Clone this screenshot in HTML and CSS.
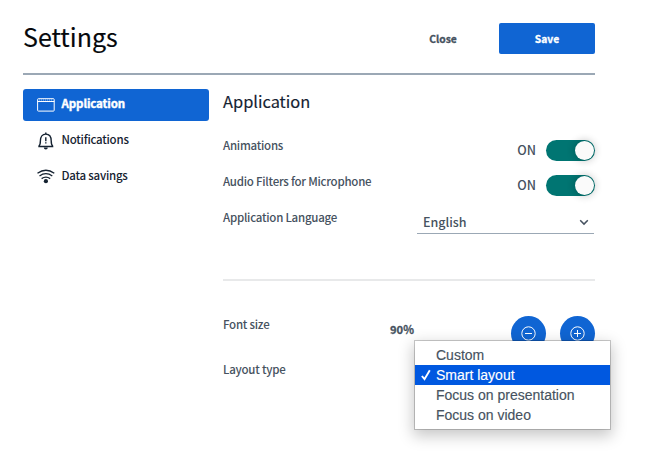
FILE: index.html
```html
<!DOCTYPE html>
<html lang="en">
<head>
<meta charset="utf-8">
<title>Settings</title>
<link rel="stylesheet" href="styles.css">
</head>
<body>
<main class="modal">
  <header class="header">
    <h1 class="title">Settings</h1>
    <button class="btn">Close</button>
    <button class="btn primary">Save</button>
  </header>
  <div class="content">
    <nav class="tabs">
      <a class="tab active">
        <svg class="icon" viewBox="0 0 18 18" fill="none" stroke="currentColor"><rect x=".6" y="2.7" width="16.6" height="12.4" rx=".8"/><path d="M.5 5.5h16.8"/><path d="M2 4h14" stroke-dasharray="1 1" opacity=".55"/></svg>
        <span class="name">Application</span>
      </a>
      <a class="tab">
        <svg class="icon" viewBox="0 0 18 18" fill="none" stroke="currentColor" stroke-width="1.4"><path d="M1.300 14.500h15M1.800 14.300c1.500-1.200 1.600-2.600 1.600-5.500C3.400 4.700 5.500 2.100 8.800 2.100s5.400 2.600 5.400 6.700c0 2.900.1 4.300 1.600 5.500"/><path d="M8.800.5v1.500M8.800 5.200v4M8.800 10.200v1.300"/><path d="M6.800 15.600h4a2 2 0 0 1-4 0z" fill="currentColor" stroke="none"/></svg>
        <span class="name">Notifications</span>
      </a>
      <a class="tab">
        <svg class="icon" viewBox="0 0 18 18" fill="none" stroke="currentColor" stroke-width="1.3"><path d="M.5 5.300q8.400-6.100 16.800 0M2.500 8q6.400-4.700 12.800 0M4.600 10.600q4.300-3 8.600 0"/><circle cx="8.900" cy="13.200" r="2.100" fill="currentColor" stroke="none"/></svg>
        <span class="name">Data savings</span>
      </a>
    </nav>
    <section class="panel">
      <h2 class="heading">Application</h2>
      <div class="row">
        <span class="label">Animations</span>
        <span class="state">ON</span><span class="toggle"><i class="thumb"></i></span>
      </div>
      <div class="row second">
        <span class="label">Audio Filters for Microphone</span>
        <span class="state">ON</span><span class="toggle"><i class="thumb"></i></span>
      </div>
      <div class="row language">
        <span class="label">Application Language</span>
        <div class="select"><span class="value">English</span><svg class="chevron" viewBox="0 0 10 8" fill="none" stroke="currentColor" stroke-width="1.5"><path d="M1.200 2.300 5 6.100 8.800 2.300"/></svg></div>
      </div>
      <hr class="separator">
      <div class="row size">
        <span class="label">Font size</span>
        <strong class="percent">90%</strong>
        <button class="round"><svg class="glyph" viewBox="0 0 16 16" fill="none" stroke="currentColor"><circle cx="7.500" cy="7.500" r="6.700"/><path d="M4 7.500h7"/></svg></button>
        <button class="round"><svg class="glyph" viewBox="0 0 16 16" fill="none" stroke="currentColor"><circle cx="7.500" cy="7.500" r="6.700"/><path d="M4 7.500h7M7.500 4v7"/></svg></button>
      </div>
      <div class="row layout">
        <span class="label">Layout type</span>
        <ul class="menu">
          <li class="option">Custom</li>
          <li class="option selected"><svg class="check" viewBox="0 0 10 12" fill="none" stroke="currentColor" stroke-width="1.900"><path d="M.9 7 3.500 10.200 8.800 1.200"/></svg>Smart layout</li>
          <li class="option">Focus on presentation</li>
          <li class="option">Focus on video</li>
        </ul>
      </div>
    </section>
  </div>
</main>
</body>
</html>
```
FILE: styles.css
```css
* { box-sizing: border-box; }
body {
  margin: 0;
  height: 473px;
  overflow: hidden;
  background: #fff;
  color: #465260;
  font: 500 11.500px/20px "Noto Sans CJK SC", sans-serif;
}
.modal { width: 572px; margin-left: 23px; }
.header {
  display: flex;
  align-items: flex-start;
  height: 75px;
  padding-top: 23px;
  border-bottom: 2px solid #9ba8b5;
}
.title {
  flex: 1;
  margin: -5px 0 0;
  color: #06080c;
  font-size: 25px;
  font-weight: 400;
  line-height: 36px;
  -webkit-text-stroke: .15px currentColor;
}
.btn {
  width: 96px;
  height: 31px;
  padding: 0;
  border: 0;
  border-radius: 2px;
  background: none;
  color: #465260;
  font: 700 10.300px/31px "Noto Sans CJK SC", sans-serif;
  -webkit-text-stroke: .3px currentColor;
}
.btn.primary { margin-left: 8px; background: #1065d3; color: #fff; }
.content { display: flex; gap: 14px; padding-top: 14px; }
.tabs { width: 186px; }
.tab {
  display: flex;
  align-items: center;
  gap: 6.500px;
  height: 32px;
  margin-bottom: 4px;
  padding: 0 14px;
  border-radius: 3px;
  color: #152231;
}
.tab .name { margin-top: -4px; letter-spacing: -.240px; }
.tab.active {
  background: #1065d3;
  color: #fff;
  font-weight: 700;
}
.tab.active .name { letter-spacing: -.100px; -webkit-text-stroke: .4px currentColor; }
.icon { width: 18px; height: 18px; }
.panel { width: 372px; }
.heading {
  height: 40px;
  margin: 0;
  color: #152231;
  font-size: 16.400px;
  font-weight: 400;
  line-height: 25px;
  -webkit-text-stroke: .15px currentColor;
}
.row { display: flex; align-items: flex-start; height: 36px; }
.label { flex: 1; padding-top: 6px; letter-spacing: -.240px; }
.state { padding-top: 11px; font-size: 12.600px; line-height: 20px; }
.toggle {
  width: 49px;
  height: 21px;
  margin: 11px 0 0 10px;
  padding: 1px;
  border-radius: 11px;
  background: #007572;
}
.thumb {
  display: block;
  width: 19px;
  height: 19px;
  margin-left: auto;
  border-radius: 50%;
  background: #fafafa;
  box-shadow: 0 0 7px 2px rgba(0, 0, 0, .16);
}
.second .state { padding-top: 10px; }
.second .toggle { margin-top: 10px; }
.language { height: 78px; }
.select {
  display: flex;
  align-items: center;
  justify-content: space-between;
  width: 177px;
  height: 23px;
  margin: 10px 1px 0 0;
  padding: 0 5px 0 6px;
  border-bottom: 1px solid #9ba8b5;
  font-size: 12.500px;
}
.chevron { width: 10px; height: 8px; }
.separator { height: 2px; margin: 0; border: 0; background: #e8e9ea; }
.size { height: 80px; padding-top: 34px; }
.percent {
  padding: 4px 0;
  font-size: 11.200px;
  font-weight: 700;
  -webkit-text-stroke: .3px currentColor;
}
.size .label { padding-top: 0; margin-top: -1px; }
.round {
  display: grid;
  place-items: center;
  width: 35px;
  height: 35px;
  margin: 1px 0 0 14px;
  padding: 0;
  border: 0;
  border-radius: 50%;
  background: #1065d3;
  color: #fff;
}
.percent + .round { margin-left: 97px; }
.glyph { width: 16px; height: 16px; }
.layout { position: relative; }
.layout .label { padding-top: 0; margin-top: -2px; }
.menu {
  position: absolute;
  top: -20px;
  left: 192px;
  width: 195px;
  height: 88px;
  margin: 0;
  padding: 4px 0;
  background: #fff;
  box-shadow: 0 0 0 1px rgba(0, 0, 0, .2), 0 5px 14px 2px rgba(0, 0, 0, .22);
  font: 400 14px/20px "Liberation Sans", sans-serif;
  list-style: none;
  -webkit-text-stroke: .15px currentColor;
}
.option { display: flex; padding-left: 21px; }
.option.selected { align-items: center; gap: 5px; padding-left: 6px; background: #0058e0; color: #fff; }
.check { width: 10px; height: 12px; }
```
